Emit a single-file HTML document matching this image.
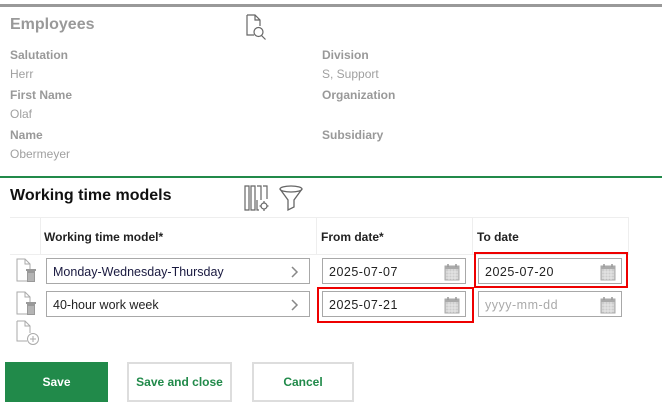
<!DOCTYPE html>
<html><head><meta charset="utf-8"><style>
*{margin:0;padding:0;box-sizing:border-box}
body{width:662px;height:407px;background:#fff;font-family:"Liberation Sans",sans-serif;position:relative;overflow:hidden}
.a{position:absolute}
.lbl{font-size:12px;font-weight:bold;color:#999}
.val{font-size:12px;color:#a0a0a0}
.hd{font-size:12px;font-weight:bold;color:#222}
.inp{position:absolute;border:1px solid #a8a8a8;background:#fff;height:26px;font-size:12.5px;color:#222;padding:6px 0 0 6px}
.chev{position:absolute;right:10px;top:7px}
.cal{position:absolute;right:5px;top:4px}
.red{position:absolute;border:2px solid #e00}
.btn{position:absolute;top:362px;height:40px;font-size:12px;font-weight:bold;text-align:center;line-height:40px}
</style></head><body>
<div class="a" style="left:0;top:4px;width:662px;height:3px;background:#999"></div>
<div class="a" style="left:10px;top:16px;font-size:16px;font-weight:bold;color:#999">Employees</div>
<svg class="a" style="left:245px;top:14px" width="24" height="26" viewBox="0 0 24 26" fill="none" stroke="#666" stroke-width="1.2"><path d="M2 1h8l5 5v6M10 1v5h5M2 1v20h7"/><circle cx="13.5" cy="18" r="4.5"/><path d="M16.5 21.5l4 4"/></svg>
<div class="a lbl" style="left:10px;top:48px">Salutation</div>
<div class="a val" style="left:10px;top:67px">Herr</div>
<div class="a lbl" style="left:10px;top:88px">First Name</div>
<div class="a val" style="left:10px;top:107px">Olaf</div>
<div class="a lbl" style="left:10px;top:128px">Name</div>
<div class="a val" style="left:10px;top:147px">Obermeyer</div>
<div class="a lbl" style="left:322px;top:48px">Division</div>
<div class="a val" style="left:322px;top:67px">S, Support</div>
<div class="a lbl" style="left:322px;top:88px">Organization</div>
<div class="a lbl" style="left:322px;top:128px">Subsidiary</div>
<div class="a" style="left:0;top:176px;width:662px;height:2px;background:#218a4a"></div>
<div class="a" style="left:10px;top:187px;font-size:16px;font-weight:bold;color:#111">Working time models</div>
<svg class="a" style="left:244px;top:185px" width="28" height="28" viewBox="0 0 28 28" fill="none" stroke="#666" stroke-width="1.2"><path d="M1 1h4v24H1zM7 1h4v24H7zM13 1h4v14M13 15v10h2M19 1h4v13"/><circle cx="20" cy="21" r="3"/><path d="M20 16v2M20 24v2M15.5 21h2M22.5 21h2"/></svg>
<svg class="a" style="left:278px;top:185px" width="26" height="27" viewBox="0 0 26 27" fill="none" stroke="#666" stroke-width="1.3"><ellipse cx="13" cy="4" rx="11" ry="3"/><path d="M2 4l8 11v10l6-3V15l8-11"/></svg>
<div class="a" style="left:10px;top:217px;width:618px;height:1px;background:#eee"></div>
<div class="a" style="left:10px;top:254px;width:618px;height:1px;background:#eee"></div>
<div class="a" style="left:40px;top:217px;width:1px;height:38px;background:#eee"></div>
<div class="a" style="left:316px;top:217px;width:1px;height:38px;background:#eee"></div>
<div class="a" style="left:472px;top:217px;width:1px;height:38px;background:#eee"></div>
<div class="a" style="left:628px;top:217px;width:1px;height:38px;background:#eee"></div>
<div class="a hd" style="left:44px;top:230px">Working time model*</div>
<div class="a hd" style="left:321px;top:230px">From date*</div>
<div class="a hd" style="left:477px;top:230px">To date</div>
<svg width="0" height="0" style="position:absolute"><defs>
<g id="del"><path d="M2 1h8l5 5v17H2z M10 1v5h5" fill="#fff" stroke="#aaa" stroke-width="1"/><rect x="11" y="11" width="10" height="2" fill="#999"/><rect x="12" y="13" width="8" height="11" fill="#999"/><path d="M14 15v8M16 15v8M18 15v8" stroke="#ddd" stroke-width=".8"/></g>
</defs></svg>
<svg class="a" style="left:15px;top:258px" width="24" height="26"><use href="#del"/></svg>
<svg class="a" style="left:15px;top:291px" width="24" height="26"><use href="#del"/></svg>
<svg class="a" style="left:15px;top:320px" width="26" height="26" fill="none" stroke="#aaa" stroke-width="1"><path d="M2 1h8l5 5v7M10 1v5h5M2 1v20h10"/><circle cx="18" cy="19" r="5.5" fill="#fff"/><path d="M18 16v6M15 19h6"/></svg>
<div class="inp" style="left:46px;top:258px;width:264px;color:#1a1a40">Monday-Wednesday-Thursday<svg class="chev" width="8" height="12"><path d="M1 1l5 5-5 5" fill="none" stroke="#888" stroke-width="1.5"/></svg></div>
<div class="inp" style="left:46px;top:291px;width:264px">40-hour work week<svg class="chev" width="8" height="12"><path d="M1 1l5 5-5 5" fill="none" stroke="#888" stroke-width="1.5"/></svg></div>
<svg width="0" height="0" style="position:absolute"><defs><g id="cal"><rect x="1" y="3" width="14" height="14" fill="#ccc" stroke="#aaa"/><rect x="1" y="3" width="14" height="3" fill="#aaa"/><path d="M4 1v3M12 1v3" stroke="#999" stroke-width="1.5"/><path d="M2 9h12M2 12h12M2 15h12M5 6v11M8 6v11M11 6v11" stroke="#eee" stroke-width=".7"/></g></defs></svg>
<div class="inp" style="left:322px;top:258px;width:144px;letter-spacing:.5px">2025-07-07<svg class="cal" width="16" height="18"><use href="#cal"/></svg></div>
<div class="inp" style="left:478px;top:258px;width:144px;letter-spacing:.5px">2025-07-20<svg class="cal" width="16" height="18"><use href="#cal"/></svg></div>
<div class="inp" style="left:322px;top:291px;width:144px;letter-spacing:.5px">2025-07-21<svg class="cal" width="16" height="18"><use href="#cal"/></svg></div>
<div class="inp" style="left:478px;top:291px;width:144px;color:#aaa;letter-spacing:.5px">yyyy-mm-dd<svg class="cal" width="16" height="18"><use href="#cal"/></svg></div>
<div class="red" style="left:474px;top:252px;width:154px;height:36px"></div>
<div class="red" style="left:317px;top:287px;width:157px;height:36px"></div>
<div class="btn" style="left:5px;width:103px;background:#218a4a;color:#fff">Save</div>
<div class="btn" style="left:127px;width:105px;border:2px solid #ddd;color:#218a4a;line-height:36px">Save and close</div>
<div class="btn" style="left:252px;width:102px;border:2px solid #ddd;color:#218a4a;line-height:36px">Cancel</div>
</body></html>
